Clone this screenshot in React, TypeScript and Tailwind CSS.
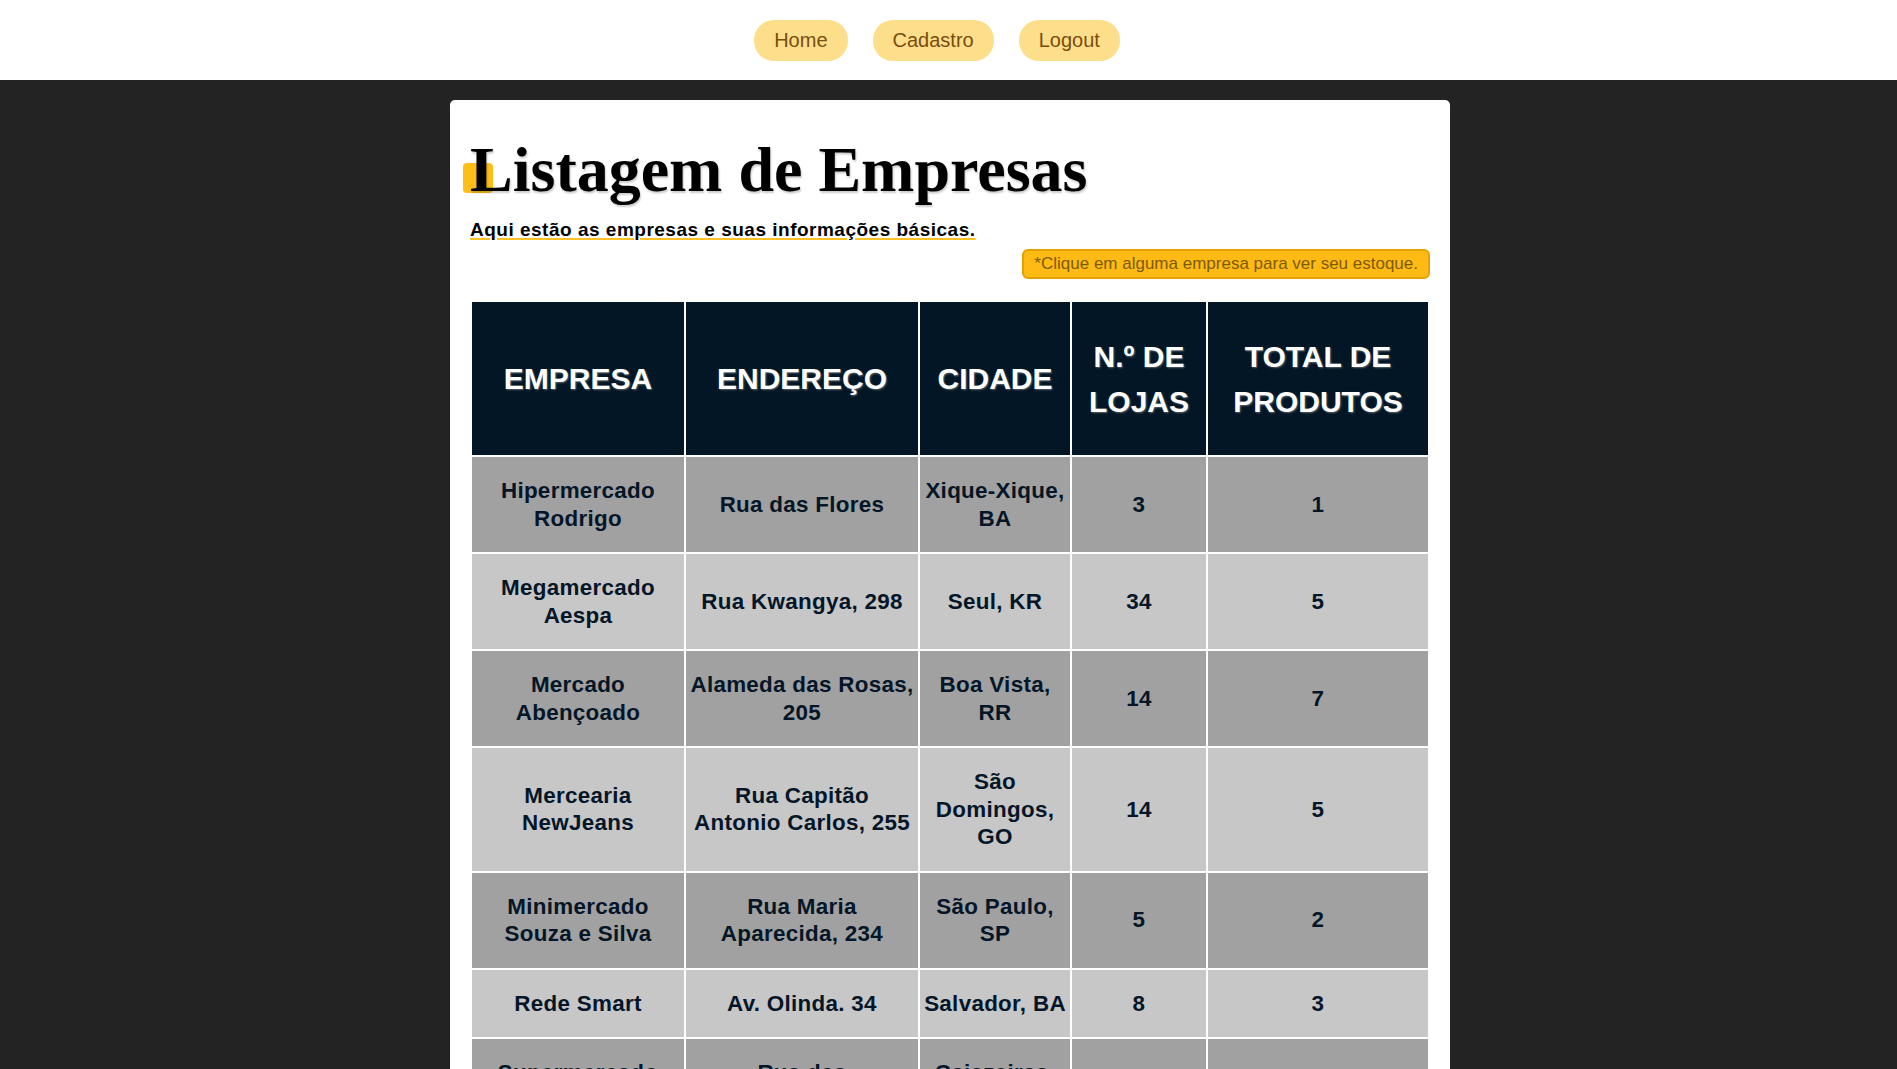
import React from "react";

type Empresa = {
  nome: string;
  endereco: string;
  cidade: string;
  lojas: number;
  produtos: number;
};

// quebras de linha iguais às da tela original
const empresas: Empresa[] = [
  { nome: "Hipermercado\nRodrigo", endereco: "Rua das Flores", cidade: "Xique-Xique,\nBA", lojas: 3, produtos: 1 },
  { nome: "Megamercado\nAespa", endereco: "Rua Kwangya, 298", cidade: "Seul, KR", lojas: 34, produtos: 5 },
  { nome: "Mercado\nAbençoado", endereco: "Alameda das Rosas,\n205", cidade: "Boa Vista,\nRR", lojas: 14, produtos: 7 },
  { nome: "Mercearia\nNewJeans", endereco: "Rua Capitão\nAntonio Carlos, 255", cidade: "São\nDomingos,\nGO", lojas: 14, produtos: 5 },
  { nome: "Minimercado\nSouza e Silva", endereco: "Rua Maria\nAparecida, 234", cidade: "São Paulo,\nSP", lojas: 5, produtos: 2 },
  { nome: "Rede Smart", endereco: "Av. Olinda. 34", cidade: "Salvador, BA", lojas: 8, produtos: 3 },
  { nome: "Supermercado\nBom Preço", endereco: "Rua das\nPalmeiras, 12", cidade: "Cajazeiras,\nPB", lojas: 9, produtos: 4 },
];

function NavButton({ label }: { label: string }) {
  return (
    <a
      href="#"
      className="h-[41px] px-5 flex items-center rounded-[20px] bg-[#fddf8b] text-[20px] text-[#7b4c0e]"
    >
      {label}
    </a>
  );
}

function Header() {
  return (
    <nav className="h-[80px] bg-white flex items-center justify-center gap-[25px] pr-[23px]">
      <NavButton label="Home" />
      <NavButton label="Cadastro" />
      <NavButton label="Logout" />
    </nav>
  );
}

export default function App() {
  const th =
    "bg-[#021625] text-white text-[30px] leading-[45px] font-bold py-[31.5px] px-1 text-center align-middle [text-shadow:1px_1px_2px_rgba(150,150,150,0.6)]";
  const td =
    "text-[22.4px] leading-[27.5px] font-bold tracking-[0.3px] text-[#041627] py-5 px-[2px] text-center align-middle whitespace-pre-line";

  return (
    <div className="min-h-screen bg-[#232323] font-['Liberation_Sans',Arial,sans-serif]">
      <Header />

      <main className="pt-5 pl-[3px] flex justify-center">
        <section className="w-[1000px] bg-white rounded-[5px] px-5 pt-[33px] pb-10">
          <h1 className="relative font-['Liberation_Serif','Times_New_Roman',serif] font-bold text-[64px] leading-[74px] text-black">
            <span className="absolute left-[-7px] top-[30px] w-[30px] h-[30px] rounded-[4px] bg-[#ffbd17]" />
            <span className="relative [text-shadow:1px_2px_2px_rgba(0,0,0,0.2)]">
              Listagem de Empresas
            </span>
          </h1>

          <p className="mt-[12px] text-[19px] leading-[22px] font-bold tracking-[0.5px] text-black">
            <span className="underline decoration-[#ffc124] decoration-[1.5px] underline-offset-[2px]">
              Aqui estão as empresas e suas informações básicas.
            </span>
          </p>

          <div className="mt-2 flex justify-end">
            <span className="h-[30px] px-[10px] flex items-center rounded-[6px] border-2 border-[#e2a200] bg-[#ffbb14] text-[17px] text-[#7d5a06]">
              *Clique em alguma empresa para ver seu estoque.
            </span>
          </div>

          <table className="mt-[21px] w-full table-fixed border-separate border-spacing-[2px]">
            <colgroup>
              <col className="w-[212px]" />
              <col className="w-[232px]" />
              <col className="w-[150px]" />
              <col className="w-[134px]" />
              <col className="w-[220px]" />
            </colgroup>
            <thead>
              <tr>
                <th className={th}>EMPRESA</th>
                <th className={th}>ENDEREÇO</th>
                <th className={th}>CIDADE</th>
                <th className={th}>N.º DE LOJAS</th>
                <th className={th}>TOTAL DE PRODUTOS</th>
              </tr>
            </thead>
            <tbody>
              {empresas.map((e, i) => (
                <tr
                  key={e.nome}
                  className={i % 2 === 0 ? "bg-[#a1a1a1] cursor-pointer" : "bg-[#c7c7c7] cursor-pointer"}
                >
                  <td className={td}>{e.nome}</td>
                  <td className={td}>{e.endereco}</td>
                  <td className={td}>{e.cidade}</td>
                  <td className={td}>{e.lojas}</td>
                  <td className={td}>{e.produtos}</td>
                </tr>
              ))}
            </tbody>
          </table>
        </section>
      </main>
    </div>
  );
}
